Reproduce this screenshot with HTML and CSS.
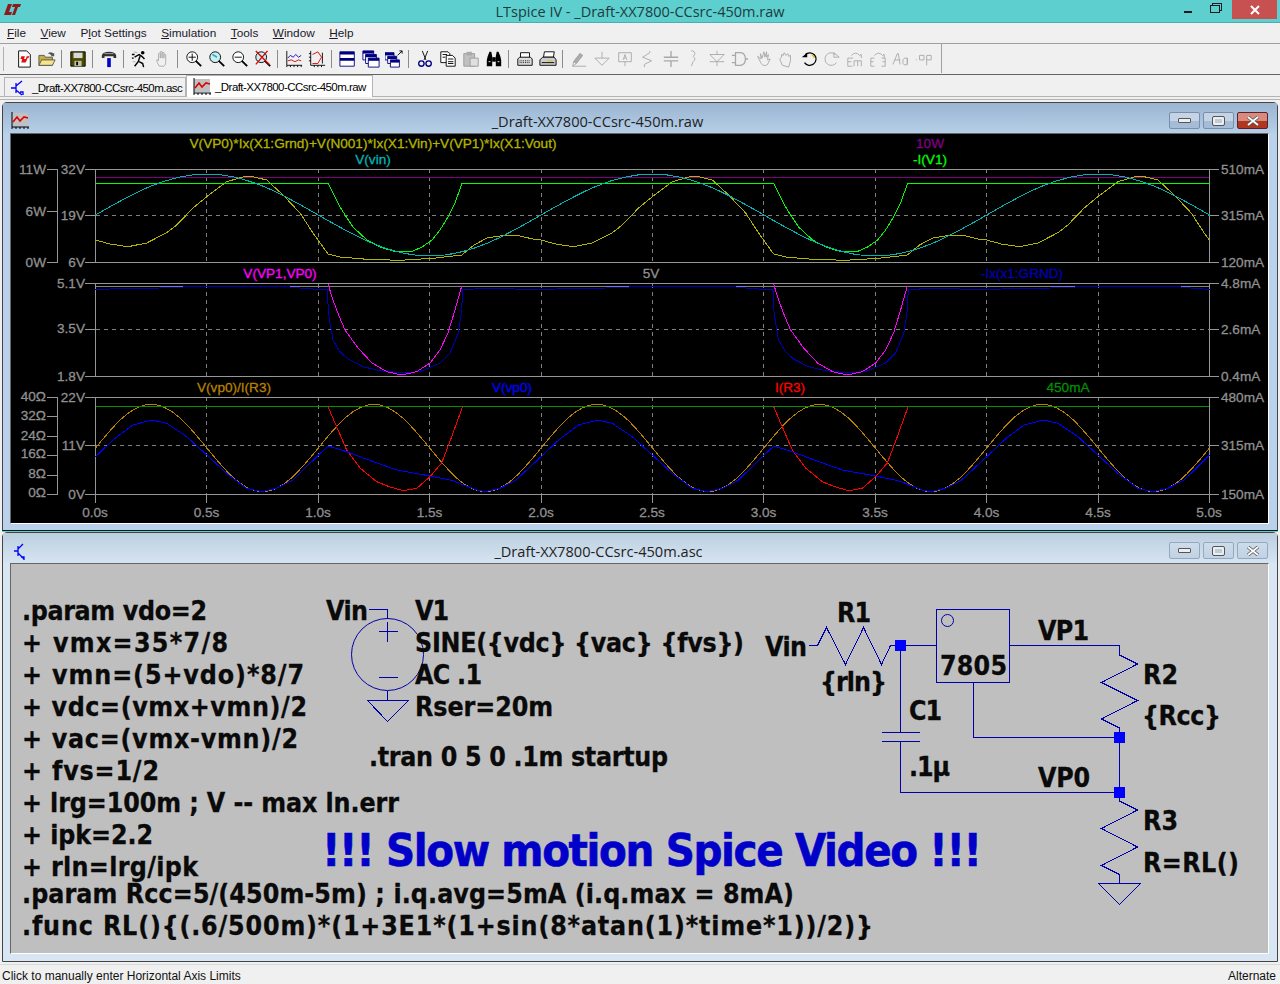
FILE: index.html
```html
<!DOCTYPE html>
<html lang="en">
<head>
    <meta charset="UTF-8" />
    <title>LTspice IV - _Draft-XX7800-CCsrc-450m.raw</title>
    <link rel="stylesheet" href="styles.css">
</head>
<body>
<div class="titlebar">
    <svg class="logo" width="18" height="12" viewBox="0 0 18 12">
        <path d="M5 0h4L6 8h3l-1 3H1z M10 0h8l-1 3h-2l-3 8H9l3-8h-3z" fill="#8c1c1c"/>
    </svg>
    <div class="app-title">LTspice IV - _Draft-XX7800-CCsrc-450m.raw</div>
    <div class="caption-btns">
        <span class="cap-min"></span>
        <span class="cap-restore"></span>
        <span class="cap-close">
            <svg width="10" height="10" viewBox="0 0 10 10"><path d="M1 1l8 8M9 1l-8 8" stroke="#fff" stroke-width="2"/></svg>
        </span>
    </div>
</div>

<div class="menubar">
    <span><u>F</u>ile</span>
    <span><u>V</u>iew</span>
    <span>P<u>l</u>ot Settings</span>
    <span><u>S</u>imulation</span>
    <span><u>T</u>ools</span>
    <span><u>W</u>indow</span>
    <span><u>H</u>elp</span>
</div>

<div class="toolbar">
    <span class="tool"><svg viewBox="0 0 20 20"><path d="M4 1h9l4 4v14H4z" fill="#fff" stroke="#000"/><path d="M7 7h4l-1 3h2l1-3h3l-1 2h-1l-2 5H7l1-4H6z" fill="#e01010"/></svg></span>
    <span class="tool"><svg viewBox="0 0 20 20"><path d="M1 6h6l1 2h8v9H1z" fill="#c8b040" stroke="#555"/><path d="M4 11h15l-3 6H1z" fill="#f4e48c" stroke="#555"/><path d="M11 4q3-3 6 0l1-1v4h-4l1-1q-2-2-4-2" fill="#555"/></svg></span>
    <span class="tsep"></span>
    <span class="tool"><svg viewBox="0 0 20 20"><path d="M2 2h16v16H2z" fill="#4a4a00" stroke="#000"/><path d="M5 3h10v6H5z" fill="#d8d8d8"/><path d="M6 12h8v6H6z" fill="#c0c0a0"/><path d="M8 13h2v4H8z" fill="#000"/></svg></span>
    <span class="tsep"></span>
    <span class="tool"><svg viewBox="0 0 20 20"><path d="M8 9h4v10H8z" fill="#0000c8"/><path d="M2 6q1-4 8-4 7 0 8 4v3h-3V7H5v2H2z" fill="#333"/><path d="M5 4h10" stroke="#aaa"/></svg></span>
    <span class="tsep"></span>
    <span class="tool"><svg viewBox="0 0 20 20"><circle cx="13" cy="3" r="2" fill="#000"/><path d="M4 8l5-3 3 2 3 3M10 7l-2 6-4 5M9 13l4 2 1 4M1 5h3M1 9h2" fill="none" stroke="#000" stroke-width="1.6"/><path d="M3 2l4 1M2 13h3" stroke="#aaa"/></svg></span>
    <span class="tool"><svg viewBox="0 0 20 20"><path d="M6 18q-3-4-3-7 1-1 2 1V4q1-1 2 0v5-7q1-1 2 0v7-6q1-1 2 0v6-4q1-1 2 0v9q0 3-2 4z" fill="none" stroke="#aaa"/></svg></span>
    <span class="tsep"></span>
    <span class="tool"><svg viewBox="0 0 20 20"><circle cx="8" cy="8" r="6" fill="#fff" stroke="#000"/><path d="M4 8h8M8 4v8" stroke="#000"/><path d="M12 12l6 6" stroke="#000" stroke-width="2"/></svg></span>
    <span class="tool"><svg viewBox="0 0 20 20"><circle cx="8" cy="8" r="6" fill="#c8f0f0" stroke="#000"/><path d="M5 5l5 3" stroke="#30b0c0" stroke-width="2"/><path d="M12 12l6 6" stroke="#000" stroke-width="2"/></svg></span>
    <span class="tool"><svg viewBox="0 0 20 20"><circle cx="8" cy="8" r="6" fill="#fff" stroke="#000"/><path d="M4 8h8" stroke="#000"/><path d="M12 12l6 6" stroke="#000" stroke-width="2"/></svg></span>
    <span class="tool"><svg viewBox="0 0 20 20"><circle cx="8" cy="8" r="6" fill="#c8f0f0" stroke="#000"/><path d="M12 12l6 6" stroke="#000" stroke-width="2"/><path d="M2 1l15 15M15 1L2 16" stroke="#e00000" stroke-width="1.5"/></svg></span>
    <span class="tsep"></span>
    <span class="tool"><svg viewBox="0 0 20 20"><path d="M2 1v16h17M2 19v-2M6 19v-2M10 19v-2M14 19v-2M18 19v-2" fill="none" stroke="#000"/><path d="M3 9l3-3 3 2 3-3 3 3 3-2" fill="none" stroke="#0000c0"/><path d="M3 12l4-1 4 2 4-2 3 1" fill="none" stroke="#e00000"/></svg></span>
    <span class="tool"><svg viewBox="0 0 20 20"><path d="M3 1v16h16M1 4h2M1 8h2M1 12h2M7 19v-2M11 19v-2M15 19v-2" fill="none" stroke="#000"/><path d="M5 5l6-3 4 6-4 7H5" fill="none" stroke="#e00000"/><path d="M16 3v12" stroke="#000"/></svg></span>
    <span class="tsep"></span>
    <span class="tool"><svg viewBox="0 0 20 20"><path d="M1 2h16v16H1z" fill="#fff" stroke="#000080"/><path d="M1 2h16v3H1zM1 9h16v3H1z" fill="#000080"/></svg></span>
    <span class="tool"><svg viewBox="0 0 20 20"><path d="M1 1h12v10H1z" fill="#fff" stroke="#000080"/><path d="M1 1h12v3H1z" fill="#000080"/><path d="M4 5h12v10H4z" fill="#fff" stroke="#000080"/><path d="M4 5h12v3H4z" fill="#000080"/><path d="M7 9h12v10H7z" fill="#fff" stroke="#000080"/><path d="M7 9h12v3H7z" fill="#000080"/></svg></span>
    <span class="tool"><svg viewBox="0 0 20 20"><path d="M0 3h10v8H0z" fill="#fff" stroke="#000080"/><path d="M0 3h10v3H0z" fill="#000080"/><path d="M3 7h10v8H3z" fill="#fff" stroke="#000080"/><path d="M3 7h10v3H3z" fill="#000080"/><path d="M6 11h10v8H6z" fill="#fff" stroke="#000080"/><path d="M6 11h10v3H6z" fill="#000080"/><path d="M14 6l5-5M16 1h3v3" fill="none" stroke="#000"/></svg></span>
    <span class="tsep"></span>
    <span class="tool"><svg viewBox="0 0 20 20"><path d="M7 1l4 10M13 1L9 11" stroke="#000"/><circle cx="6" cy="15" r="3" fill="none" stroke="#000080" stroke-width="1.5"/><circle cx="14" cy="15" r="3" fill="none" stroke="#000080" stroke-width="1.5"/></svg></span>
    <span class="tool"><svg viewBox="0 0 20 20"><path d="M2 2h8l2 2v10H2z" fill="#fff" stroke="#000"/><path d="M8 6h7l3 3v9H8z" fill="#fff" stroke="#000"/><path d="M4 5h5M4 8h3M10 10h6M10 13h6M10 15h6" stroke="#000"/></svg></span>
    <span class="tool"><svg viewBox="0 0 20 20"><path d="M2 4h12v14H2z" fill="#c0c0c0" stroke="#999"/><path d="M5 2h6v4H5z" fill="#aaa"/><path d="M9 9h9v9H9z" fill="#e0e0e0" stroke="#999"/></svg></span>
    <span class="tool"><svg viewBox="0 0 20 20"><path d="M3 7l2-5h2l1 5v11H2v-7zM17 7l-2-5h-2l-1 5v11h6v-7z" fill="#000"/><path d="M8 8h4v5H8z" fill="#000"/><path d="M4 13h2M14 13h2" stroke="#fff"/></svg></span>
    <span class="tsep"></span>
    <span class="tool"><svg viewBox="0 0 20 20"><path d="M5 3h10v6H5z" fill="#fff" stroke="#000"/><path d="M2 10l2-2h12l2 2v7H2z" fill="#ddd" stroke="#000"/><path d="M4 12h12M4 14h12" stroke="#000" stroke-dasharray="1 1"/></svg></span>
    <span class="tool"><svg viewBox="0 0 20 20"><path d="M6 2h11l-1 6H5z" fill="#fff" stroke="#000"/><path d="M1 11l3-3h13l2 3v6H1z" fill="#ccc" stroke="#000"/><path d="M3 14h14" stroke="#000"/><path d="M9 12h6" stroke="#e0c000"/></svg></span>
    <span class="tsep"></span>
    <span class="tool off"><svg viewBox="0 0 20 20"><path d="M3 18h15M3 18l1-5 7-9 3 2-7 9z"/><path d="M4 13l7-9 3 2-7 9z" fill="#aaa"/></svg></span>
    <span class="tool off"><svg viewBox="0 0 20 20"><path d="M10 2v7M2 9h16l-8 8z"/></svg></span>
    <span class="tool off"><svg viewBox="0 0 20 20"><path d="M3 3h14v10H3zM10 13v5"/><path d="M8 11l2-6 2 6M9 9h2"/></svg></span>
    <span class="tool off"><svg viewBox="0 0 20 20"><path d="M12 1v2L4 8l10 4-8 4v3"/></svg></span>
    <span class="tool off"><svg viewBox="0 0 20 20"><path d="M10 1v7M2 8h16M2 12h16M10 12v7" stroke-width="1.5"/></svg></span>
    <span class="tool off"><svg viewBox="0 0 20 20"><path d="M7 1h2q4 3 0 6 4 3 0 6-1 3-2 5"/></svg></span>
    <span class="tool off"><svg viewBox="0 0 20 20"><path d="M10 1v4M2 5h16l-8 8zM2 13h16M10 13v5"/></svg></span>
    <span class="tool off"><svg viewBox="0 0 20 20"><path d="M5 3h6q5 1 5 7t-5 7H5zM1 6h4M1 14h4M16 10h3" stroke-width="1.4"/></svg></span>
    <span class="tool off"><svg viewBox="0 0 20 20"><path d="M4 7l4 8q3 4 7 1l3-6-3 1 1-6-2 3V2l-2 6-1-6-2 7-2-5 1 6z"/></svg></span>
    <span class="tool off"><svg viewBox="0 0 20 20"><path d="M6 17l-3-7 2-2V5l2 1 1-3 2 3 2-2 1 3 2-1v6l-2 7z"/></svg></span>
    <span class="tool"><svg viewBox="0 0 20 20"><path d="M6 5a7 7 0 1 1-1 9" fill="none" stroke="#000" stroke-width="1.4"/><path d="M2 8l6-5v5z" fill="#000"/><path d="M13 5a7 7 0 0 1 3 4" stroke="#d8c000" stroke-width="1.4" fill="none"/></svg></span>
    <span class="tool off"><svg viewBox="0 0 20 20"><path d="M14 5a7 7 0 1 0 1 9M18 8l-6-5v5z"/></svg></span>
    <span class="tool off"><svg viewBox="0 0 20 20"><path d="M2 9h6M2 9v9h5M2 13h4M9 18v-6M13 18v-6M17 18v-6M9 12h8M6 6q5-5 9 0l2-1v4"/></svg></span>
    <span class="tool off"><svg viewBox="0 0 20 20"><path d="M6 9H2v9h4M2 13h3M14 9h4v9h-4M18 13h-3M6 6q5-5 9 0l2-1v4"/></svg></span>
    <span class="tool off"><svg viewBox="0 0 20 20"><path d="M1 16l5-12h1l2 12M3 11h6M17 9q-5-1-5 4t5 3zM17 9v7"/></svg></span>
    <span class="tool off"><svg viewBox="0 0 20 20"><path d="M1 11h1M5 6h5v5H5zM13 6h5v5h-5zM13 11v6"/></svg></span>
    <span class="tsep tsep-end"></span>
</div>

<div class="tabstrip">
    <div class="tab">
        <svg class="tab-icon" width="20" height="16" viewBox="0 0 20 16"><path d="M1 8h5M6 3v10M6 6l6-5M6 10l6 5M10 12h3v3" fill="none" stroke="#0000ff" stroke-width="1.3"/></svg>
        _Draft-XX7800-CCsrc-450m.asc
    </div>
    <div class="tab tab-active">
        <svg class="tab-icon" width="18" height="18" viewBox="0 0 18 18"><path d="M1 1h16v13H1z" fill="#c0c0c0"/><path d="M1 0v15h17M1 17v-2M5 17v-2M9 17v-2M13 17v-2M17 17v-2" fill="none" stroke="#000"/><path d="M2 10l4-5 3 4 4-4 4 1" fill="none" stroke="#e00000" stroke-width="1.6"/></svg>
        _Draft-XX7800-CCsrc-450m.raw
    </div>
</div>

<div class="mdi">
    <div class="child child-active">
        <div class="child-title">
            <svg class="child-icon" width="18" height="18" viewBox="0 0 18 18"><path d="M1 1h16v13H1z" fill="#c0c0c0"/><path d="M1 0v15h17M1 17v-2M5 17v-2M9 17v-2M13 17v-2M17 17v-2" fill="none" stroke="#000"/><path d="M2 10l4-5 3 4 4-4 4 1" fill="none" stroke="#e00000" stroke-width="1.6"/></svg>
            <span class="child-name">_Draft-XX7800-CCsrc-450m.raw</span>
            <span class="win-btn"><i class="g-min"></i></span>
            <span class="win-btn"><i class="g-max"></i></span>
            <span class="win-btn win-close"><svg width="14" height="10" viewBox="0 0 14 10"><path d="M2 1l10 8M12 1L2 9" stroke="#555" stroke-width="3.4"/><path d="M2 1l10 8M12 1L2 9" stroke="#fff" stroke-width="1.8"/></svg></span>
        </div>
        <div class="child-body">
            <svg class="plot" width="1257" height="389" viewBox="11 134 1257 389">
                <defs>
                    <clipPath id="plot-clip"><rect x="95" y="134" width="1115" height="389"/></clipPath>
                    <polyline id="p-yellow" points="95.5,240 110,244 128,246.7 146.7,243 166.7,232.7 176.7,225 193,208 206.7,196.7 226.7,181.7 243,177 253,176.7 266.7,180 283,195 300,213 313,233 328,254 340,257 367,259.3 400,260.3 433,258.3 461.7,255 474,245 487,238 504,235.3 517,235.3 534,239.3 541.1,240"/>
                    <path id="p-cyan" d="M95.5 215C131.8 194 166.6 174 206.9 174C247.2 174 282 194 318.3 215C354.6 236 389.4 256 429.7 256C470 256 504.8 236 541.1 215"/>
                    <polyline id="p-lime" points="95.5,183.3 328,183.3 333,193 340,207 347,218 353,227 367,240 380,247 393,251 403,252 413,251 422,247 432,240 440,230 448,217 455,203 462,183.3 541.1,183.3"/>
                    <polyline id="p-magenta" points="328,284 333,300 339,316 345,330 358,348 372,363 387,371.7 401.7,375 416.7,371.7 430,363 440,350 448,333 455,310 461.7,286"/>
                    <polyline id="p-ix" points="95.5,289.3 160,288 200,286.3 283,286.3 300,288 316.7,289.3 327.3,289.3 328.3,310 330,323 333,340 340,351.7 348,359 363,366.7 380,370.7 400,372.7 420,371.7 440,363 450,353 458.3,333 461.7,310 462.7,289.3 500.7,288.3 520.7,289.3 541.1,289.3"/>
                    <path id="p-orange" d="M95.5 448C113.7 425.6 131 404.3 151.2 404.3C171.3 404.3 188.6 425.6 206.9 448C225.1 470.4 242.5 491.7 262.6 491.7C282.7 491.7 300 470.4 318.3 448"/>
                    <polyline id="p-vp0" points="95.5,456.7 115,438.3 133,425 152,420 166.7,423.3 186.7,436.7 206.7,455 226.7,473.3 246.7,488.3 261.7,491.7 276.7,488.3 293,480 316.7,456.7 328.3,446 346.7,451.7 366.7,459.3 396.7,470 430,476 453,480.7 476.7,490 485,491.7 500,488.3 516,480 530,467 541.1,456.7"/>
                    <polyline id="p-red" points="328.3,407.3 335,423 346.7,450 360,468 376.7,481.7 390,487 403.3,490.7 416.7,488.3 430,476.7 441.7,463 451.7,436.7 462.3,407.3"/>
                </defs>

                <path class="grid-dash" d="M95.5 215.5H1209M95.5 329.5H1209M95.5 445.5H1209"/>
                <path class="grid-dash" d="M206.5 169V262M318.5 169V262M429.5 169V262M541.5 169V262M652.5 169V262M763.5 169V262M875.5 169V262M986.5 169V262M1098.5 169V262"/>
                <path class="grid-dash" d="M206.5 284V376M318.5 284V376M429.5 284V376M541.5 284V376M652.5 284V376M763.5 284V376M875.5 284V376M986.5 284V376M1098.5 284V376"/>
                <path class="grid-dash" d="M206.5 397V494M318.5 397V494M429.5 397V494M541.5 397V494M652.5 397V494M763.5 397V494M875.5 397V494M986.5 397V494M1098.5 397V494"/>

                <path class="axis" d="M85 169.5H1219M85 215.5H95M1209 215.5H1219M85 262.5H1219M95.5 169V262M1209.5 169V262"/>
                <path class="axis" d="M85 283.5H1219M85 329.5H95M1209 329.5H1219M85 376.5H1219M95.5 284V376M1209.5 284V376"/>
                <path class="axis" d="M85 397.5H1219M85 445.5H95M1209 445.5H1219M85 494.5H1219M95.5 397V503M1209.5 397V503"/>
                <path class="axis" d="M206.5 494V503M318.5 494V503M429.5 494V503M541.5 494V503M652.5 494V503M763.5 494V503M875.5 494V503M986.5 494V503M1098.5 494V503"/>
                <path class="axis" d="M47 169.5H57.5V262.5H47M47 211.5H57"/>
                <path class="axis" d="M47 397.5H57.5V494.5H47M47 416.5H57M47 436.5H57M47 455.5H57M47 475.5H57"/>

                <g clip-path="url(#plot-clip)">
                    <path class="trace t-purple" d="M95.5 177.5H1209"/>
                    <path class="trace t-grey" d="M95.5 286.5H1209"/>
                    <use class="trace t-yellow" href="#p-yellow"/>
                    <use class="trace t-yellow" href="#p-yellow" x="445.6"/>
                    <use class="trace t-yellow" href="#p-yellow" x="891.2"/>
                    <use class="trace t-lime" href="#p-lime"/>
                    <use class="trace t-lime" href="#p-lime" x="445.6"/>
                    <use class="trace t-lime" href="#p-lime" x="891.2"/>
                    <use class="trace t-cyan" href="#p-cyan"/>
                    <use class="trace t-cyan" href="#p-cyan" x="445.6"/>
                    <use class="trace t-cyan" href="#p-cyan" x="891.2"/>

                    <use class="trace t-ix" href="#p-ix"/>
                    <use class="trace t-ix" href="#p-ix" x="445.6"/>
                    <use class="trace t-ix" href="#p-ix" x="891.2"/>
                    <use class="trace t-magenta" href="#p-magenta"/>
                    <use class="trace t-magenta" href="#p-magenta" x="445.6"/>

                    <use class="trace t-orange" href="#p-orange"/>
                    <use class="trace t-orange" href="#p-orange" x="222.8"/>
                    <use class="trace t-orange" href="#p-orange" x="445.6"/>
                    <use class="trace t-orange" href="#p-orange" x="668.4"/>
                    <use class="trace t-orange" href="#p-orange" x="891.2"/>
                    <use class="trace t-red" href="#p-red"/>
                    <use class="trace t-red" href="#p-red" x="445.6"/>
                    <use class="trace t-vp0" href="#p-vp0"/>
                    <use class="trace t-vp0" href="#p-vp0" x="445.6"/>
                    <use class="trace t-vp0" href="#p-vp0" x="891.2"/>
                    <path class="trace t-green" d="M95.5 406.5H1209"/>
                </g>

                <g class="ptext mid">
                    <text class="c-yellow" x="373" y="148">V(VP0)*Ix(X1:Grnd)+V(N001)*Ix(X1:Vin)+V(VP1)*Ix(X1:Vout)</text>
                    <text class="c-cyan" x="373" y="164">V(vin)</text>
                    <text class="c-purple" x="930" y="148">10W</text>
                    <text class="c-lime" x="930" y="164">-I(V1)</text>
                    <text class="c-magenta" x="280" y="278">V(VP1,VP0)</text>
                    <text class="c-grey" x="651" y="278">5V</text>
                    <text class="c-ix" x="1022" y="278">-Ix(x1:GRND)</text>
                    <text class="c-orange" x="234" y="392">V(vp0)/I(R3)</text>
                    <text class="c-blue" x="512" y="392">V(vp0)</text>
                    <text class="c-red" x="790" y="392">I(R3)</text>
                    <text class="c-green" x="1068" y="392">450mA</text>
                </g>
                <g class="ptext mid c-grey">
                    <text x="95" y="517">0.0s</text>
                    <text x="206.5" y="517">0.5s</text>
                    <text x="318" y="517">1.0s</text>
                    <text x="429.5" y="517">1.5s</text>
                    <text x="541" y="517">2.0s</text>
                    <text x="652" y="517">2.5s</text>
                    <text x="763.5" y="517">3.0s</text>
                    <text x="875" y="517">3.5s</text>
                    <text x="986.5" y="517">4.0s</text>
                    <text x="1098" y="517">4.5s</text>
                    <text x="1209" y="517">5.0s</text>
                </g>
                <g class="ptext end c-grey">
                    <text x="46" y="174">11W</text>
                    <text x="46" y="216">6W</text>
                    <text x="46" y="267">0W</text>
                    <text x="85" y="174">32V</text>
                    <text x="85" y="220">19V</text>
                    <text x="85" y="267">6V</text>
                    <text x="85" y="288">5.1V</text>
                    <text x="85" y="333">3.5V</text>
                    <text x="85" y="381">1.8V</text>
                    <text x="85" y="402">22V</text>
                    <text x="85" y="450">11V</text>
                    <text x="85" y="499">0V</text>
                    <text x="46" y="401">40Ω</text>
                    <text x="46" y="420">32Ω</text>
                    <text x="46" y="440">24Ω</text>
                    <text x="46" y="458">16Ω</text>
                    <text x="46" y="478">8Ω</text>
                    <text x="46" y="497">0Ω</text>
                </g>
                <g class="ptext c-grey">
                    <text x="1221" y="174">510mA</text>
                    <text x="1221" y="220">315mA</text>
                    <text x="1221" y="267">120mA</text>
                    <text x="1221" y="288">4.8mA</text>
                    <text x="1221" y="334">2.6mA</text>
                    <text x="1221" y="381">0.4mA</text>
                    <text x="1221" y="402">480mA</text>
                    <text x="1221" y="450">315mA</text>
                    <text x="1221" y="499">150mA</text>
                </g>
            </svg>
        </div>
    </div>

    <div class="child">
        <div class="child-title">
            <svg class="child-icon" width="20" height="18" viewBox="0 0 20 18"><path d="M3 9h4M7 4v10M7 7l5-5M7 11l6 6M10 15h3v3" fill="none" stroke="#0000ff" stroke-width="1.3"/></svg>
            <span class="child-name">_Draft-XX7800-CCsrc-450m.asc</span>
            <span class="win-btn"><i class="g-min"></i></span>
            <span class="win-btn"><i class="g-max"></i></span>
            <span class="win-btn"><svg width="14" height="10" viewBox="0 0 14 10"><path d="M2 1l10 8M12 1L2 9" stroke="#555" stroke-width="3.4"/><path d="M2 1l10 8M12 1L2 9" stroke="#fff" stroke-width="1.8"/></svg></span>
        </div>
        <div class="child-body">
            <svg class="schematic" width="1257" height="389" viewBox="11 564 1257 389">
                <g class="wire">
                    <path d="M368.5 609.5H387.5V618.5M387.5 690.5V700.5"/>
                    <circle cx="387.5" cy="654.5" r="36"/>
                    <path d="M378.5 631.5H397.5M387.5 621.5V641.5M378.5 677.5H397.5"/>
                    <path d="M367.5 700.5H408.5L387.5 721.5Z"/>

                    <path d="M808.5 645.5H817.5L826.5 627.5L845.5 664.5L863.5 627.5L881.5 664.5L890.5 645.5H937"/>
                    <rect x="936.5" y="609.5" width="73" height="73"/>
                    <circle cx="947.5" cy="620.5" r="6"/>
                    <path d="M1009.5 645.5H1119.5V655L1137.5 664L1101.5 682.5L1137.5 700.5L1101.5 719L1119.5 728V792.5"/>
                    <path d="M973.5 682.5V737.5H1119.5"/>
                    <path d="M900.5 645.5V732.5M881.5 732.5H919.5M881.5 741.5H919.5M900.5 741.5V792.5H1119.5"/>
                    <path d="M1119.5 792.5V801L1137.5 810L1101.5 828.5L1137.5 847L1101.5 865.5L1119.5 874.5V883.5"/>
                    <path d="M1098.5 883.5H1140.5L1119.5 904.5Z"/>
                </g>
                <g class="junction">
                    <rect x="895" y="640" width="11" height="11"/>
                    <rect x="1114" y="732" width="11" height="11"/>
                    <rect x="1114" y="787" width="11" height="11"/>
                </g>

                <g class="stext">
                    <text x="22" y="620" textLength="185">.param vdo=2</text>
                    <text x="22" y="652" textLength="206">+ vmx=35*7/8</text>
                    <text x="22" y="684" textLength="282">+ vmn=(5+vdo)*8/7</text>
                    <text x="22" y="716" textLength="285">+ vdc=(vmx+vmn)/2</text>
                    <text x="22" y="748" textLength="276">+ vac=(vmx-vmn)/2</text>
                    <text x="22" y="780" textLength="137">+ fvs=1/2</text>
                    <text x="22" y="812" textLength="377">+ lrg=100m ; V -- max ln.err</text>
                    <text x="22" y="844" textLength="131">+ ipk=2.2</text>
                    <text x="22" y="876" textLength="176">+ rln=lrg/ipk</text>
                    <text x="22" y="903" textLength="772">.param Rcc=5/(450m-5m) ; i.q.avg=5mA (i.q.max = 8mA)</text>
                    <text x="22" y="935" textLength="851">.func RL(){(.6/500m)*(1+3E1*(1+sin(8*atan(1)*time*1))/2)}</text>
                    <text x="326" y="620" textLength="42">Vin</text>
                    <text x="415" y="620" textLength="34">V1</text>
                    <text x="415" y="652" textLength="329">SINE({vdc} {vac} {fvs})</text>
                    <text x="415" y="684" textLength="67">AC .1</text>
                    <text x="415" y="716" textLength="138">Rser=20m</text>
                    <text x="369" y="766" textLength="299">.tran 0 5 0 .1m startup</text>
                    <text x="837" y="622" textLength="34">R1</text>
                    <text x="765" y="656" textLength="42">Vin</text>
                    <text x="820" y="691" textLength="67">{rln}</text>
                    <text x="940" y="675" textLength="67">7805</text>
                    <text x="1038" y="640" textLength="51">VP1</text>
                    <text x="1143" y="684" textLength="35">R2</text>
                    <text x="1142" y="725" textLength="79">{Rcc}</text>
                    <text x="909" y="720" textLength="33">C1</text>
                    <text x="909" y="776" textLength="41">.1µ</text>
                    <text x="1038" y="787" textLength="52">VP0</text>
                    <text x="1143" y="830" textLength="35">R3</text>
                    <text x="1143" y="872" textLength="96">R=RL()</text>
                </g>
                <text class="banner" x="322" y="866" textLength="660">!!! Slow motion Spice Video !!!</text>
            </svg>
        </div>
    </div>
</div>

<div class="statusbar">
    <span>Click to manually enter Horizontal Axis Limits</span>
    <span>Alternate</span>
</div>
</body>
</html>
```

FILE: styles.css
```css
body {
  margin: 0;
  width: 1280px;
  height: 984px;
  overflow: hidden;
  display: flex;
  flex-direction: column;
  background: #f0f0f0;
  color: #000;
  font-family: "Liberation Sans", Arial, sans-serif;
  font-size: 12px;
}

/* main window chrome */
.titlebar {
  flex: none;
  height: 22px;
  background: #5dcfcf;
  border-bottom: 1px solid #4aaeae;
  display: grid;
  grid-template-columns: 1fr auto 1fr;
  align-items: center;
  position: relative;
}
.logo {
  margin-left: 3px;
  margin-bottom: 2px;
}
.app-title {
  font-family: "Open Sans", sans-serif;
  font-size: 14.5px;
  color: #1d3c3c;
}
.caption-btns {
  justify-self: end;
  display: flex;
  align-items: flex-start;
  height: 22px;
  padding-right: 3px;
}
.cap-min {
  width: 8px;
  height: 2px;
  margin: 11px 18px 0 0;
  background: #1a1a1a;
}
.cap-restore {
  width: 8px;
  height: 6px;
  margin: 5px 12px 0 0;
  border: 1px solid #1a1a1a;
  box-shadow: 2px -2px 0 -1px #5dcfcf, 2px -2px 0 0 #1a1a1a;
}
.cap-close {
  width: 45px;
  height: 19px;
  background: #c75050;
  display: flex;
  align-items: center;
  justify-content: center;
}

.menubar {
  flex: none;
  height: 20px;
  border-bottom: 1px solid #a0a0a0;
  display: flex;
  align-items: center;
  gap: 14.5px;
  padding-left: 7px;
  font-size: 11.8px;
  color: #1a1a2a;
}

.toolbar {
  flex: none;
  height: 31px;
  box-sizing: border-box;
  border-bottom: 1px solid #646464;
  display: flex;
  align-items: center;
  padding: 0 0 1px 12px;
  position: relative;
}
.toolbar::before {
  content: "";
  position: absolute;
  left: 3px;
  top: 3px;
  bottom: 3px;
  width: 1px;
  background: #b0b0b0;
}
.tool {
  width: 23px;
  height: 20px;
  display: flex;
  align-items: center;
  justify-content: center;
}
.tool svg {
  width: 18px;
  height: 18px;
}
.tool.off svg {
  fill: none;
  stroke: #a8a8a8;
  stroke-width: 1;
}
.tsep {
  width: 1px;
  height: 18px;
  margin: 0 4px 0 3px;
  background: #8c8c8c;
}
.tsep-end {
  height: 29px;
  margin-left: 6px;
  background: #a0a0a0;
}

.tabstrip {
  flex: none;
  height: 22px;
  box-sizing: border-box;
  border-bottom: 1px solid #b4b4b4;
  display: flex;
  align-items: flex-end;
  padding-left: 4px;
}
.tab {
  height: 19px;
  width: 182px;
  box-sizing: border-box;
  border: 1px solid #b4b4b4;
  border-bottom: none;
  background: #f0f0f0;
  display: flex;
  align-items: center;
  padding-top: 2px;
  font-size: 11.5px;
  letter-spacing: -0.55px;
  white-space: nowrap;
}
.tab-icon {
  margin: 0 2px 0 5px;
  flex: none;
}
.tab-active {
  height: 22px;
  width: 187px;
  padding-top: 0;
  background: #fff;
  margin-bottom: -1px;
}
.tab-active .tab-icon {
  margin: 0 4px 0 6px;
}

/* MDI client and its two child windows */
.mdi {
  flex: 1;
  min-height: 0;
  border-top: 1px solid #b4b4b4;
  margin-top: 2px;
  padding: 2px 2px 0;
}
.child {
  width: 1276px;
  height: 430px;
  box-sizing: border-box;
  border: 1px solid #444;
  border-radius: 5px 5px 0 0;
  background: #d8e5f2;
  display: flex;
  flex-direction: column;
}
.child-active {
  background: #b9d1ea;
  height: 429px;
  border-bottom-color: #111;
  box-shadow: 0 1px 0 #5dcfcf;
  margin-bottom: 1px;
}
.child-title {
  flex: none;
  height: 30px;
  box-sizing: border-box;
  display: flex;
  align-items: center;
  padding: 5px 9px 0 0;
  background: linear-gradient(#bccfdf, #d6e4f2);
  font-family: "Open Sans", sans-serif;
  font-size: 14.6px;
  color: #222;
}
.child-active .child-title {
  background: linear-gradient(#9bb5d2, #b5cfe8);
}
.child-icon {
  margin-left: 8px;
  flex: none;
}
.child-name {
  flex: 1;
  text-align: center;
}
.win-btn {
  width: 31px;
  height: 17px;
  box-sizing: border-box;
  margin-left: 3px;
  border: 1px solid #7a8ea8;
  border-radius: 2px;
  background: linear-gradient(#c4d4e6 50%, #a4bcd6 50%);
  display: flex;
  align-items: center;
  justify-content: center;
}
.child:not(.child-active) .win-btn {
  background: linear-gradient(#cedceb, #c0d2e4);
  border-color: #96a8c0;
}
.child-active .win-close {
  background: linear-gradient(#d88a7c 50%, #b0361e 50%);
  border-color: #5a2030;
}
.g-min {
  width: 11px;
  height: 3px;
  background: #eee;
  border: 1px solid #555;
  border-radius: 1px;
}
.g-max {
  width: 7px;
  height: 4px;
  background: #bcd;
  border: 2px solid #eee;
  outline: 1px solid #555;
  border-radius: 1px;
}
.child-body {
  flex: none;
  width: 1257px;
  height: 389px;
  margin-left: 7px;
  border-top: 1px solid #666;
  border-left: 1px solid #666;
  border-right: 1px solid #fff;
  border-bottom: 1px solid #fff;
}
.plot {
  display: block;
  background: #000;
}
.schematic {
  display: block;
  background: #bfbfbf;
}

/* waveform viewer */
.grid-dash {
  fill: none;
  stroke: #808080;
  stroke-dasharray: 4 4;
  shape-rendering: crispEdges;
}
.axis {
  fill: none;
  stroke: #969696;
  shape-rendering: crispEdges;
}
.trace {
  fill: none;
  stroke-width: 1;
  shape-rendering: crispEdges;
}
.t-purple { stroke: #800080; }
.t-grey { stroke: #808080; }
.t-yellow { stroke: #b4b400; }
.t-lime { stroke: #00ff00; }
.t-cyan { stroke: #00b4b4; }
.t-ix { stroke: #0000b4; }
.t-magenta { stroke: #ff00ff; }
.t-orange { stroke: #b88000; }
.t-red { stroke: #ff0000; }
.t-vp0 { stroke: #0000ff; }
.t-green { stroke: #009000; }

.ptext {
  font-family: "Liberation Sans", Arial, sans-serif;
  font-size: 13.6px;
  stroke-width: 0.3px;
}
.mid { text-anchor: middle; }
.end { text-anchor: end; }
.c-yellow { fill: #b4b400; stroke: #b4b400; }
.c-cyan { fill: #00b4b4; stroke: #00b4b4; }
.c-purple { fill: #800080; stroke: #800080; }
.c-lime { fill: #00ff00; stroke: #00ff00; }
.c-magenta { fill: #ff00ff; stroke: #ff00ff; }
.c-grey { fill: #909090; stroke: #909090; }
.c-ix { fill: #0000b4; stroke: #0000b4; }
.c-orange { fill: #b88000; stroke: #b88000; }
.c-blue { fill: #0000ff; stroke: #0000ff; }
.c-red { fill: #ff0000; stroke: #ff0000; }
.c-green { fill: #009000; stroke: #009000; }

/* schematic */
.wire {
  fill: none;
  stroke: #0000a8;
  shape-rendering: crispEdges;
}
.wire circle {
  shape-rendering: auto;
}
.junction {
  fill: #0000ff;
}
.stext {
  font-family: "DejaVu Sans", sans-serif;
  font-stretch: condensed;
  font-weight: bold;
  font-size: 26.5px;
  fill: #0a0a0a;
  stroke: #0a0a0a;
  stroke-width: 0.3px;
}
.banner {
  font-family: "DejaVu Sans", sans-serif;
  font-stretch: condensed;
  font-weight: bold;
  font-size: 45px;
  fill: #0000c8;
  stroke: #0000c8;
  stroke-width: 0.6px;
}

.statusbar {
  flex: none;
  height: 20px;
  box-sizing: border-box;
  border-top: 1px solid #d8d8d8;
  display: flex;
  align-items: center;
  justify-content: space-between;
  padding: 2px 4px 0 2px;
  color: #111;
}
```
